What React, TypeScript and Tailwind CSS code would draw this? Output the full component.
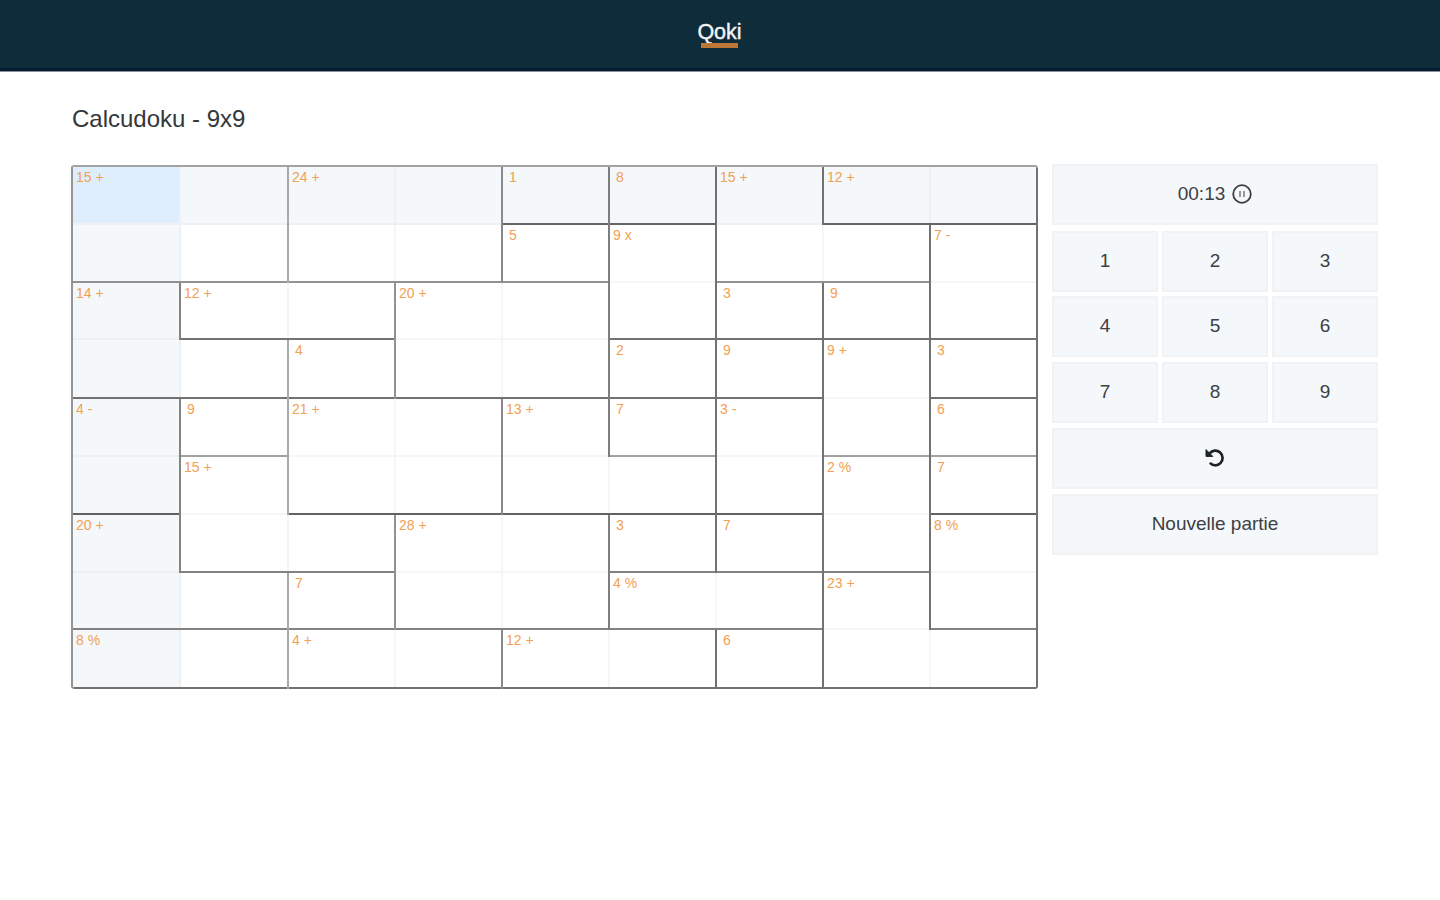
import React from "react";

type Cell = {
  label?: string;
  right: boolean;
  bottom: boolean;
};

// R = thick right edge, B = thick bottom edge, followed by an optional cage label.
const ROWS: string[][] = [
  ["|15 +", "R|", "|24 +", "R|", "RB|1", "RB|8", "R|15 +", "B|12 +", "RB|"],
  ["B|", "RB|", "B|", "RB|", "RB|5", "R|9 x", "B|", "RB|", "R|7 -"],
  ["R|14 +", "B|12 +", "RB|", "|20 +", "R|", "RB|", "RB|3", "RB|9", "RB|"],
  ["B|", "RB|", "RB|4", "B|", "RB|", "RB|2", "RB|9", "R|9 +", "RB|3"],
  ["R|4 -", "RB|9", "|21 +", "R|", "R|13 +", "RB|7", "R|3 -", "RB|", "RB|6"],
  ["RB|", "R|15 +", "B|", "RB|", "B|", "RB|", "RB|", "R|2 %", "RB|7"],
  ["R|20 +", "B|", "RB|", "|28 +", "R|", "RB|3", "RB|7", "RB|", "R|8 %"],
  ["B|", "RB|", "RB|7", "B|", "RB|", "B|4 %", "RB|", "R|23 +", "RB|"],
  ["B|8 %", "RB|", "B|4 +", "RB|", "B|12 +", "RB|", "RB|6", "B|", "RB|"],
];

function parse(code: string): Cell {
  const [edges, label] = code.split("|");
  return { label, right: edges.includes("R"), bottom: edges.includes("B") };
}

const RIGHT_TONES = [
  "border-r-[#838383]",
  "border-r-[#a9a9a9]",
  "border-r-[#929292]",
  "border-r-[#8a8a8a]",
  "border-r-[#7e7e7e]",
  "border-r-[#727272]",
  "border-r-[#727272]",
  "border-r-[#727272]",
  "border-r-[#727272]",
];

const BOTTOM_TONES = [
  "border-b-[#626466]",
  "border-b-[#929292]",
  "border-b-[#727272]",
  "border-b-[#727272]",
  "border-b-[#a0a0a0]",
  "border-b-[#626262]",
  "border-b-[#828282]",
  "border-b-[#828282]",
  "border-b-[#727272]",
];

function BoardCell({ row, col, cell }: { row: number; col: number; cell: Cell }) {
  const lit = row === 0 || col === 0;
  const bg = row === 0 && col === 0 ? "bg-[#deeefd]" : lit ? "bg-[#f4f8fb]" : "bg-white";
  const faintRight = lit ? "border-r-[#edf1f4]" : "border-r-[#f6f6f6]";
  const faintBottom = lit ? "border-b-[#edf1f4]" : "border-b-[#f6f6f6]";
  const right = `border-r-2 ${cell.right ? RIGHT_TONES[col] : faintRight}`;
  const bottom = `border-b-2 ${cell.bottom ? BOTTOM_TONES[row] : faintBottom}`;
  const inset = cell.label && cell.label.length === 1 ? "pl-[6px]" : "pl-[3px]";
  // The outer box owns the shared corner, so a thick edge is never cut by a faint one.
  const bottomOwnsCorner = cell.bottom && !cell.right;
  return (
    <div className={`${bg} ${bottomOwnsCorner ? bottom : right}`}>
      <div
        className={`h-full pt-[2px] text-[14px] leading-4 whitespace-nowrap text-[#f2a052] ${inset} ${
          bottomOwnsCorner ? right : bottom
        }`}
      >
        {cell.label}
      </div>
    </div>
  );
}

function Board() {
  return (
    <div className="grid w-[967px] grid-cols-[108px_108px_107px_107px_107px_107px_107px_107px_107px] grid-rows-[58px_58px_57px_59px_58px_58px_58px_57px_59px] overflow-hidden rounded-[3px] border-t-2 border-l-2 border-t-[#a2a2a2] border-l-[#949494]">
      {ROWS.map((row, r) =>
        row.map((code, c) => <BoardCell key={`${r}-${c}`} row={r} col={c} cell={parse(code)} />)
      )}
    </div>
  );
}

const BUTTON =
  "flex h-[61px] items-center justify-center border-2 border-[#f0f2f3] bg-[#f4f8fb] pb-[2px] text-[19px] leading-none text-[#3c4043]";

function PauseIcon() {
  return (
    <svg width="20" height="20" viewBox="0 0 20 20" fill="none" stroke="#3c4043">
      <circle cx="10" cy="10" r="8.8" strokeWidth="1.8" />
      <path d="M8 7v6M12 7v6" strokeWidth="1.4" stroke="#6b7074" />
    </svg>
  );
}

function UndoIcon() {
  return (
    <svg width="20" height="20" viewBox="0 0 20 20">
      <path
        d="M4.6 5.4A7.3 7.3 0 1 1 4.9 14.9"
        fill="none"
        stroke="#1d2326"
        strokeWidth="2.7"
      />
      <path d="M1 1.6V8.4H7.8Z" fill="#1d2326" stroke="#1d2326" strokeWidth="1" strokeLinejoin="round" />
    </svg>
  );
}

function Keypad() {
  return (
    <div className="mt-[-1px] flex w-[326px] flex-col">
      <div className={`${BUTTON} gap-[7px]`}>
        <span>00:13</span>
        <PauseIcon />
      </div>
      <div className="mt-[6px] grid grid-cols-[106px_106px_106px] grid-rows-[65px_66px_61px] gap-x-1">
        {[1, 2, 3, 4, 5, 6, 7, 8, 9].map((n) => (
          <button key={n} className={BUTTON}>
            {n}
          </button>
        ))}
      </div>
      <button className={`${BUTTON} mt-[5px]`}>
        <UndoIcon />
      </button>
      <button className={`${BUTTON} mt-[5px] pb-0`}>Nouvelle partie</button>
    </div>
  );
}

export default function App() {
  return (
    <div className="h-[900px] w-[1440px] overflow-hidden bg-white font-['Liberation_Sans',Arial,sans-serif]">
      <header className="h-[72px] border-b border-[#8d929c] bg-[#0e2c3a]">
        <div className="flex h-[71px] flex-col items-center border-b-[3px] border-[#041b31] pt-[21px] pr-px">
          <span className="h-[22px] text-[21.5px] leading-[23px] text-[#f3f5f6] [-webkit-text-stroke:0.4px_#f3f5f6]">
            Qoki
          </span>
          <span className="h-[5px] w-[37px] bg-[#bd7838]" />
        </div>
      </header>
      <main className="pt-[33px] pl-[71px]">
        <h1 className="pl-px text-[24px] leading-7 text-[#34373a]">Calcudoku - 9x9</h1>
        <div className="mt-[32px] flex items-start gap-[14px]">
          <Board />
          <Keypad />
        </div>
      </main>
    </div>
  );
}
